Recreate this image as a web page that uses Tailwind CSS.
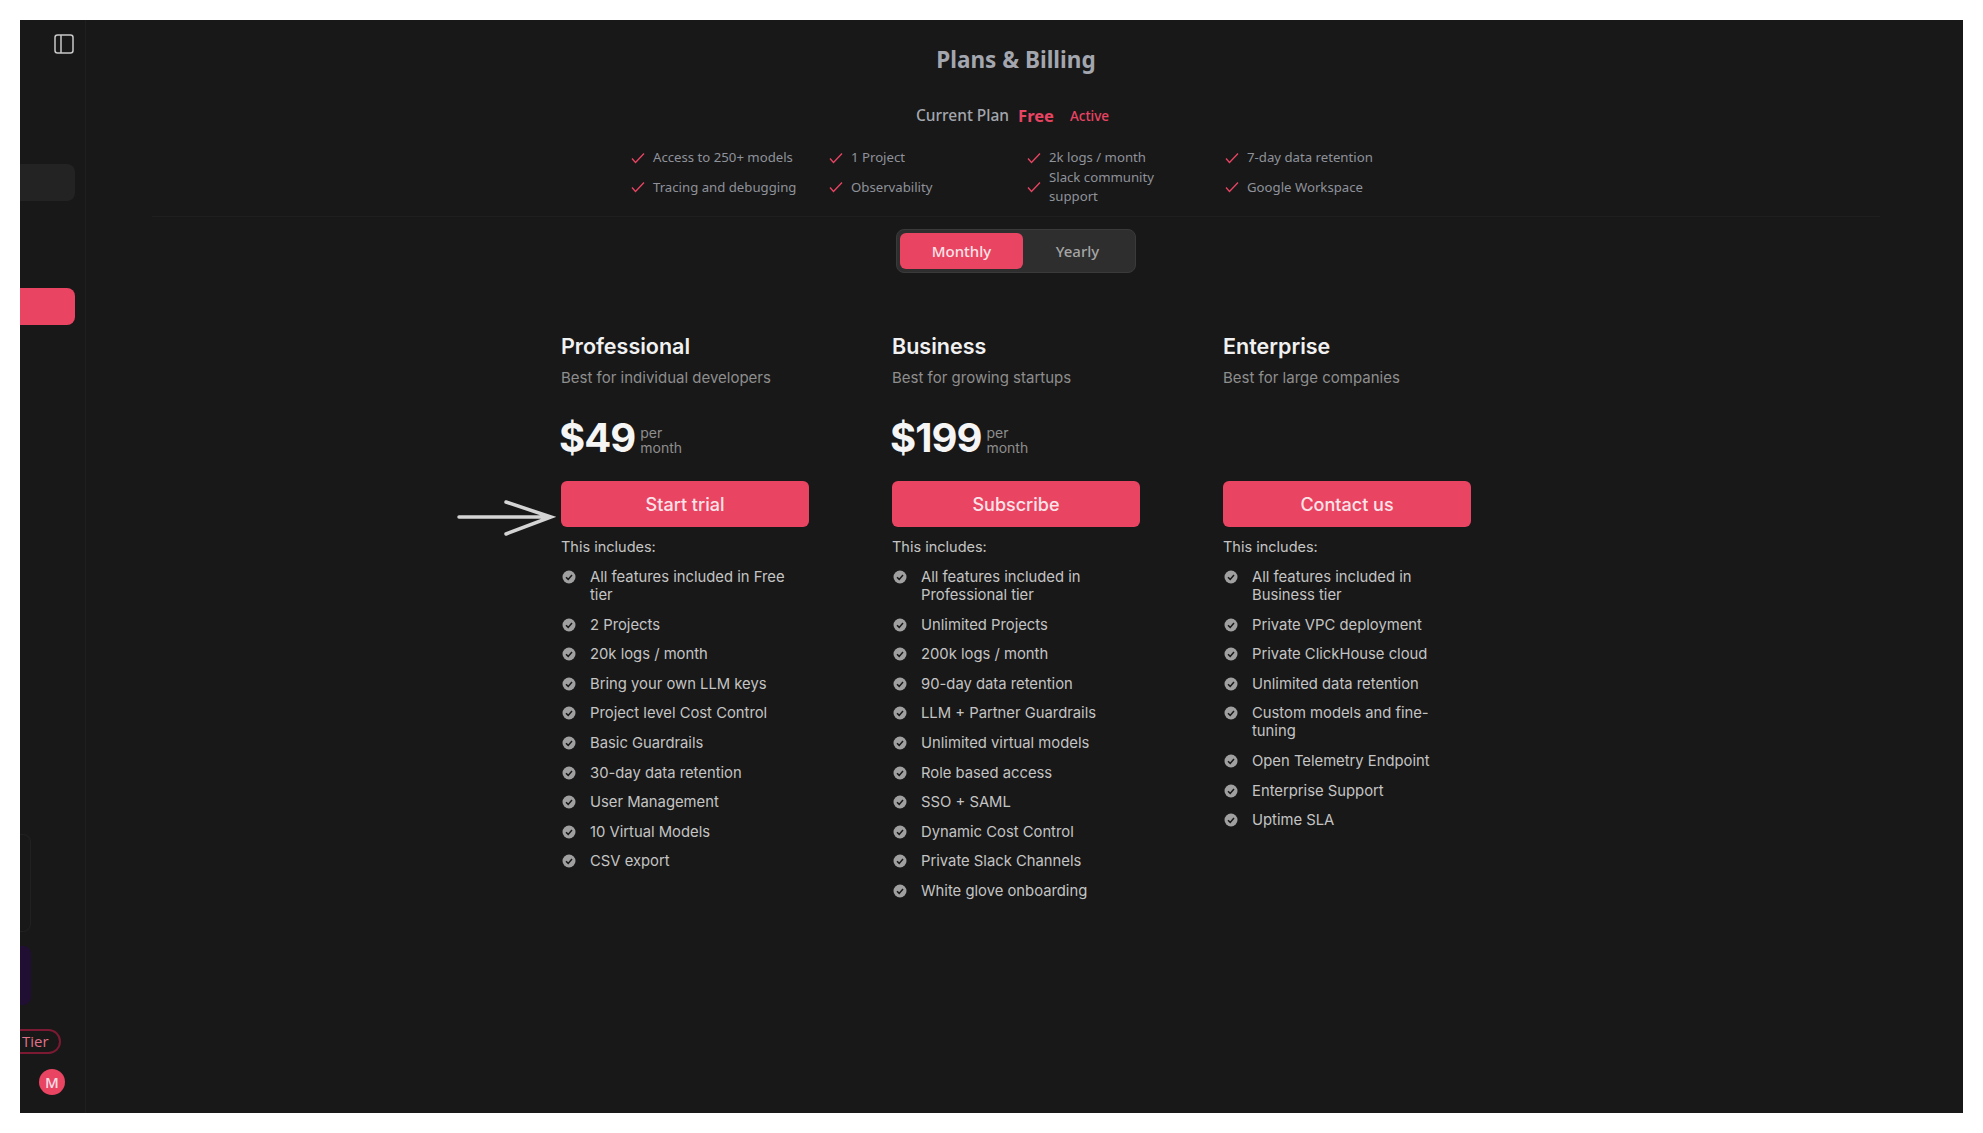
<!DOCTYPE html>
<html lang="en">
<head>
    <meta charset="UTF-8">
    <title>Plans &amp; Billing</title>
    <script src="https://cdn.jsdelivr.net/npm/@tailwindcss/browser@4"></script>
</head>
<body class="bg-white p-[20px] font-['Inter',sans-serif]">
<div class="flex h-[1093px] w-[1943px] bg-[#181818] overflow-hidden">
    <!-- sidebar -->
    <aside class="w-[66px] shrink-0 border-r border-[#1f1f1f] flex flex-col">
        <svg class="ml-[34px] mt-[14px] w-[20px] h-[20px] text-[#c8c8c8]" viewBox="0 0 20 20" fill="none" stroke="currentColor" stroke-width="1.5">
            <rect x="1" y="1" width="18" height="18" rx="2.5"/><path d="M7 1v18"/>
        </svg>
        <div class="mt-[110px] h-[37px] w-[55px] bg-[#232323] rounded-r-lg"></div>
        <div class="mt-[87px] h-[37px] w-[55px] bg-[#ea4463] rounded-r-lg"></div>
        <div class="mt-[509px] h-[98px] w-[11px] border border-l-0 border-[#212121] rounded-r-lg"></div>
        <div class="mt-[14px] h-[59px] w-[11px] bg-[#200f33] rounded-r-lg"></div>
        <div class="mt-[24px] h-[25px] w-[41px] border-2 border-l-0 border-[#7c1a33] rounded-r-full flex items-center pl-[2px] text-[15px] font-medium text-[#e0728a] font-['Open_Sans',sans-serif]">Tier</div>
        <div class="mt-[15px] ml-[19px] w-[26px] h-[26px] rounded-full bg-[#ea4463] flex items-center justify-center text-[15px] font-semibold text-[#f8dce2] font-['Open_Sans',sans-serif]">M</div>
    </aside>

    <main class="flex-1 mr-[17px] flex flex-col items-center">
        <h1 class="mt-[27px] text-[22.5px] leading-[26px] font-bold text-[#a3a6ae] font-['Noto_Sans',sans-serif]">Plans &amp; Billing</h1>

        <div class="mt-[33px] flex items-center h-[20px] font-['Noto_Sans',sans-serif] -ml-[7px]">
            <span class="text-[15.5px] font-medium text-[#a3a6ae]">Current Plan</span>
            <span class="ml-[9px] text-[16.5px] font-bold text-[#ea4463]">Free</span>
            <span class="ml-[16px] text-[13.5px] font-medium text-[#ea4463]">Active</span>
        </div>

        <div id="free-features" class="mt-[16px] ml-[22px] grid grid-cols-[repeat(4,198px)] grid-rows-[31px_28px] w-[792px] h-[62px] text-[13.2px] leading-[19px] text-[#8f929a] font-['Noto_Sans',sans-serif]"></div>

        <div class="mt-[12px] w-[1728px] border-t border-[#1f1f1f]"></div>

        <div class="mt-[12px] flex w-[240px] h-[44px] p-[3px] rounded-lg bg-[#2e2e2e] border border-[#3a3a3a] text-[15px] font-medium font-['Noto_Sans',sans-serif]">
            <div class="w-[123px] rounded-md bg-[#ea4463] text-[#fbe3e8] flex items-center justify-center">Monthly</div>
            <div class="flex-1 text-[#a5a5a5] flex items-center justify-center">Yearly</div>
        </div>

        <!-- plan cards -->
        <div class="mt-[59px] grid grid-cols-[repeat(3,248px)] gap-x-[83px] relative">
            <!-- arrow pointing at first button -->
            <svg class="absolute left-[-105px] top-[167px] w-[100px] h-[40px] text-[#d4d4d4]" viewBox="0 0 100 40" fill="none" stroke="currentColor" stroke-width="3.5" stroke-linecap="round">
                <path d="M3 18h91M50 3l45 15-45 17"/>
            </svg>

            <section>
                <h2 class="text-[21.5px] leading-[28px] font-semibold text-[#f1f1f1]">Professional</h2>
                <p class="mt-[7px] text-[15px] leading-[22px] text-[#8e8e8e]">Best for individual developers</p>
                <div class="mt-[23px] h-[52px] flex items-center">
                    <span class="text-[40px] font-bold text-[#f5f5f5] -ml-[2px] tracking-tight">$49</span>
                    <span class="ml-[5px] mt-[4px] text-[14px] leading-[15px] text-[#8e8e8e]">per<br>month</span>
                </div>
                <div class="mt-[17px] h-[46px] pt-[1px] rounded-md bg-[#ea4463] flex items-center justify-center text-[18px] font-medium text-[#fbe3e8]">Start trial</div>
                <p class="mt-[11px] text-[14.5px] leading-[18px] text-[#c4c4c4]">This includes:</p>
                <ul data-plan="professional" class="mt-[12px] pr-[10px] flex flex-col gap-[11.6px] text-[14.8px] leading-[18px] text-[#c4c4c4]"></ul>
            </section>

            <section>
                <h2 class="text-[21.5px] leading-[28px] font-semibold text-[#f1f1f1]">Business</h2>
                <p class="mt-[7px] text-[15px] leading-[22px] text-[#8e8e8e]">Best for growing startups</p>
                <div class="mt-[23px] h-[52px] flex items-center">
                    <span class="text-[40px] font-bold text-[#f5f5f5] -ml-[2px] tracking-tight">$199</span>
                    <span class="ml-[5px] mt-[4px] text-[14px] leading-[15px] text-[#8e8e8e]">per<br>month</span>
                </div>
                <div class="mt-[17px] h-[46px] pt-[1px] rounded-md bg-[#ea4463] flex items-center justify-center text-[18px] font-medium text-[#fbe3e8]">Subscribe</div>
                <p class="mt-[11px] text-[14.5px] leading-[18px] text-[#c4c4c4]">This includes:</p>
                <ul data-plan="business" class="mt-[12px] pr-[10px] flex flex-col gap-[11.6px] text-[14.8px] leading-[18px] text-[#c4c4c4]"></ul>
            </section>

            <section>
                <h2 class="text-[21.5px] leading-[28px] font-semibold text-[#f1f1f1]">Enterprise</h2>
                <p class="mt-[7px] text-[15px] leading-[22px] text-[#8e8e8e]">Best for large companies</p>
                <div class="mt-[23px] h-[52px]"></div>
                <div class="mt-[17px] h-[46px] pt-[1px] rounded-md bg-[#ea4463] flex items-center justify-center text-[18px] font-medium text-[#fbe3e8]">Contact us</div>
                <p class="mt-[11px] text-[14.5px] leading-[18px] text-[#c4c4c4]">This includes:</p>
                <ul data-plan="enterprise" class="mt-[12px] pr-[10px] flex flex-col gap-[11.6px] text-[14.8px] leading-[18px] text-[#c4c4c4]"></ul>
            </section>
        </div>
    </main>
</div>
<script>
    const free_features = ['Access to 250+ models', '1 Project', '2k logs / month', '7-day data retention',
        'Tracing and debugging', 'Observability', 'Slack community support', 'Google Workspace'];

    const plans = {
        professional: ['All features included in Free tier', '2 Projects', '20k logs / month', 'Bring your own LLM keys',
            'Project level Cost Control', 'Basic Guardrails', '30-day data retention', 'User Management', '10 Virtual Models', 'CSV export'],
        business: ['All features included in Professional tier', 'Unlimited Projects', '200k logs / month', '90-day data retention',
            'LLM + Partner Guardrails', 'Unlimited virtual models', 'Role based access', 'SSO + SAML', 'Dynamic Cost Control',
            'Private Slack Channels', 'White glove onboarding'],
        enterprise: ['All features included in Business tier', 'Private VPC deployment', 'Private ClickHouse cloud', 'Unlimited data retention',
            'Custom models and fine-tuning', 'Open Telemetry Endpoint', 'Enterprise Support', 'Uptime SLA']
    };

    const free_box = document.getElementById('free-features');
    for (let text of free_features) {
        let row = document.createElement('div');
        row.className = 'flex items-center gap-[8px]';
        let span_class = text.startsWith('Slack') ? 'w-[125px]' : 'whitespace-nowrap';
        row.innerHTML = `<svg class="w-[14px] h-[14px] shrink-0 text-[#ea4463]" viewBox="0 0 14 14" fill="none" stroke="currentColor" stroke-width="1.3"><path d="M1 7.5l3.5 4L13 2.5"/></svg><span class="${span_class}">${text}</span>`;
        free_box.appendChild(row);
    }

    for (let ul of document.querySelectorAll('ul[data-plan]')) {
        for (let text of plans[ul.dataset.plan]) {
            let li = document.createElement('li');
            li.className = 'flex gap-[14px]';
            li.innerHTML = `<svg class="w-[14px] h-[14px] shrink-0 ml-[1px] mt-[2px] text-[#a0a0a0]" viewBox="0 0 14 14"><circle cx="7" cy="7" r="6.5" fill="currentColor"/><path d="M4 7.2l2.2 2.2L10 5" fill="none" stroke="#181818" stroke-width="1.5"/></svg><span>${text}</span>`;
            ul.appendChild(li);
        }
    }
</script>
</body>
</html>
